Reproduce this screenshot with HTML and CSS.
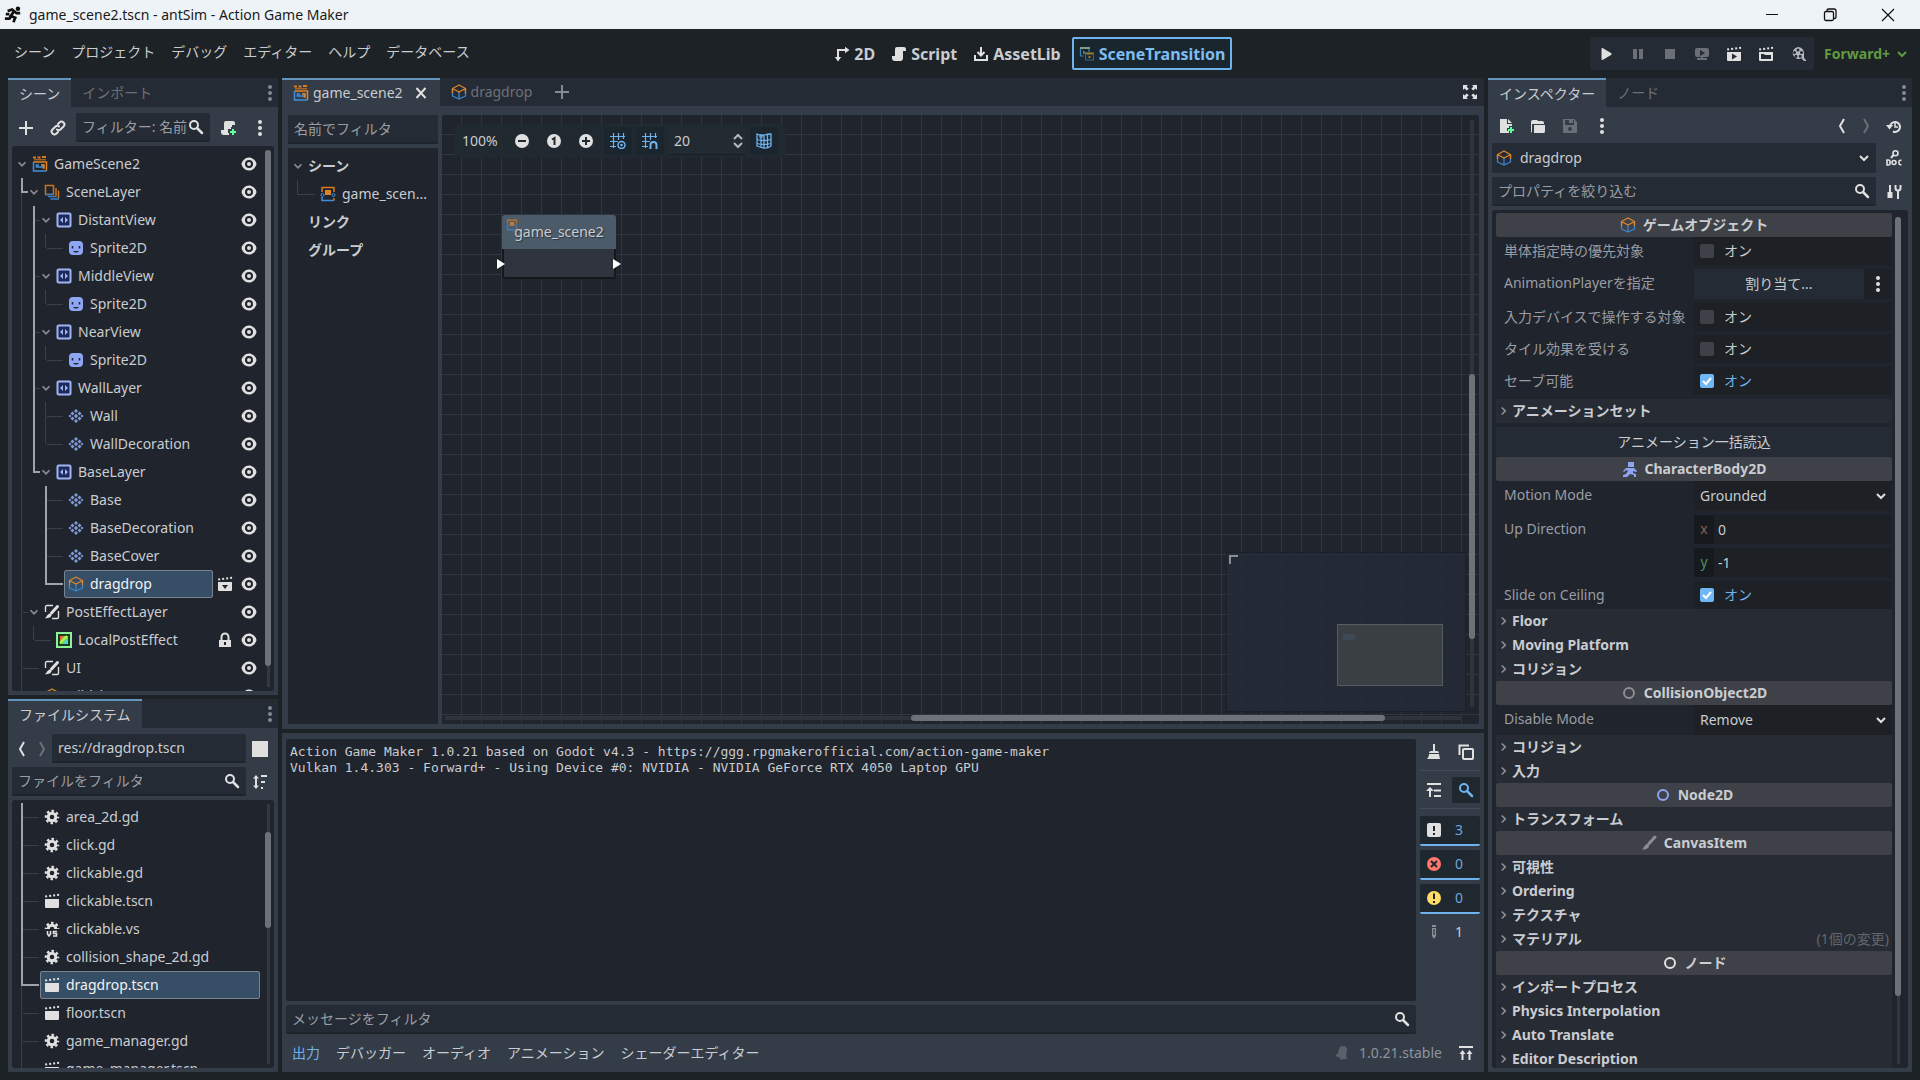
FILE: index.html
```html
<!DOCTYPE html>
<html lang="ja">
<head>
<meta charset="utf-8">
<title>game_scene2.tscn - antSim - Action Game Maker</title>
<link rel="stylesheet" href="styles.css">
</head>
<body>
<svg class="sprite" aria-hidden="true">
  <symbol id="eye" viewBox="0 0 16 16"><path fill="currentColor" d="M8 1.500C4 1.500 1 5 .5 8c.5 3 3.500 6.500 7.500 6.500s7-3.500 7.500-6.500c-.5-3-3.500-6.500-7.500-6.500zm0 2.500a4 4 0 0 1 0 8 4 4 0 0 1 0-8zm0 2a2 2 0 0 0 0 4 2 2 0 0 0 0-4z" fill-rule="evenodd"/></symbol>
  <symbol id="dots" viewBox="0 0 16 16"><g fill="currentColor"><circle cx="8" cy="2" r="2"/><circle cx="8" cy="8" r="2"/><circle cx="8" cy="14" r="2"/></g></symbol>
  <symbol id="plus" viewBox="0 0 16 16"><path d="M8 1v14M1 8h14" stroke="currentColor" stroke-width="2"/></symbol>
  <symbol id="link" viewBox="0 0 16 16"><g fill="none" stroke="currentColor" stroke-width="2" stroke-linecap="round"><path d="M7 9.500a2.600 2.600 0 0 0 3.500 0l3-3a2.600 2.600 0 0 0-4-4L8 4"/><path d="M9 6.500a2.600 2.600 0 0 0-3.500 0l-3 3a2.600 2.600 0 0 0 4 4L8 12"/></g></symbol>
  <symbol id="search" viewBox="0 0 16 16"><circle cx="6" cy="6" r="4" fill="none" stroke="currentColor" stroke-width="2"/><path d="M9 9l5 5" stroke="currentColor" stroke-width="2.500" stroke-linecap="round"/></symbol>
  <symbol id="script" viewBox="0 0 16 16"><path fill="currentColor" d="M6 1a2 2 0 0 0-2 2v7H1v2a3 3 0 0 0 3 3h6a3 3 0 0 0 2-3V5h3V3a2 2 0 0 0-2-2z"/></symbol>
  <symbol id="scriptadd" viewBox="0 0 16 16"><path fill="currentColor" d="M6 1a2 2 0 0 0-2 2v7H1v2a3 3 0 0 0 3 3h5v-2H8V9h3V7h1V5h3V3a2 2 0 0 0-2-2z"/><path fill="#5fff97" d="M12 9h2v2h2v2h-2v2h-2v-2h-2v-2h2z"/></symbol>
  <symbol id="down" viewBox="0 0 16 16"><path d="M4 6l4 4 4-4" fill="none" stroke="currentColor" stroke-width="2"/></symbol>
  <symbol id="rightarrow" viewBox="0 0 16 16"><path d="M6 4l4 4-4 4" fill="none" stroke="currentColor" stroke-width="2"/></symbol>
  <symbol id="back" viewBox="0 0 16 16"><path d="M10 1L6 8l4 7" fill="none" stroke="currentColor" stroke-width="2"/></symbol>
  <symbol id="fwd" viewBox="0 0 16 16"><path d="M6 1l4 7-4 7" fill="none" stroke="currentColor" stroke-width="2"/></symbol>
  <symbol id="gamescene" viewBox="0 0 16 16"><path d="M1 1.500h3M5.500 1.500h3M10 1h4" stroke="#d97b20" stroke-width="2"/><path d="M2 3.800h12" stroke="#d97b20"/><path d="M14.500 15V6h-13" fill="none" stroke="#e08326" stroke-width="1.500"/><path d="M1.500 6v9h13" fill="none" stroke="#3f8fdc" stroke-width="1.500"/><path d="M8 11H4.500v-2H7M8 11h3.500v-2H9.500" fill="none" stroke="#3f8fdc" stroke-width="1.500"/><path d="M9 9h3v3h-1.500" fill="none" stroke="#e08326" stroke-width="1.500"/></symbol>
  <symbol id="layers" viewBox="0 0 16 16"><path d="M1.500 10.500v-9h8v9z" fill="none" stroke="#c8731f" stroke-width="1.500"/><path d="M12 4v8.500M14.500 6.500v8" stroke="#c8731f" stroke-width="1.500"/><path d="M1 10.500h8.500M4 12.700h8.500M6.500 15h8.500" stroke="#3f7fc0" stroke-width="1.300"/></symbol>
  <symbol id="parallax" viewBox="0 0 16 16"><rect x="1.500" y="1.500" width="13" height="13" rx="1" fill="#1c2a5a" stroke="#a0b4f5" stroke-width="2"/><path d="M7 5v6L4 8zM9 5v6l3-3z" fill="#a0b4f5"/></symbol>
  <symbol id="sprite" viewBox="0 0 16 16"><rect x="1" y="1" width="14" height="14" rx="4" fill="#8da5f3"/><path d="M4.500 6v2.500M11.500 6v2.500" stroke="#1c2740" stroke-width="1.600"/><path d="M5 11c1.500 2 4.500 2 6 0z" fill="#1c2740"/></symbol>
  <symbol id="tiles" viewBox="0 0 16 16"><g fill="#8199d8"><path d="M8 1l2 2-2 2-2-2zM4.500 3.500l2 2-2 2-2-2zM11.500 3.500l2 2-2 2-2-2zM8 5.800L10.200 8 8 10.200 5.800 8zM2 6.500L3.500 8 2 9.500.5 8zM14 6.500L15.500 8 14 9.500 12.500 8zM4.500 8.500l2 2-2 2-2-2zM11.500 8.500l2 2-2 2-2-2zM8 11l2 2-2 2-2-2z"/></g></symbol>
  <symbol id="cube" viewBox="0 0 16 16"><g fill="none" stroke-width="1.300" stroke-linejoin="round"><path d="M1.500 4.500V12L8 15l6.500-3V4.500" stroke="#3d86cf"/><path d="M8 8v7" stroke="#3d86cf"/><path d="M1.500 9V4.500L8 1l6.500 3.500V9M1.500 4.500L8 8l6.500-3.500" stroke="#dd842c"/></g></symbol>
  <symbol id="canvaslayer" viewBox="0 0 16 16"><path d="M1.500 8V3a1.500 1.500 0 0 1 1.500-1.500h6M14.500 7v6a1.500 1.500 0 0 1-1.500 1.500H8" fill="none" stroke="currentColor" stroke-width="1.400"/><path d="M13.500 2.500L7.500 9" stroke="currentColor" stroke-width="3" stroke-linecap="round"/><path d="M6 9.500c2 0 2 2.500.5 3.500S3 14.500 1 14c2-1 2-4 5-4.500z" fill="currentColor"/></symbol>
  <symbol id="effect" viewBox="0 0 16 16"><rect x="1" y="1" width="14" height="14" fill="#1d3a20" stroke="#8cf29a" stroke-width="2"/><path d="M4 4h8v8H4z" fill="#5ce65c"/><path d="M4 4h4L4 9z" fill="#f0603a"/><path d="M12 6v6H7z" fill="#52cfe0"/><path d="M11 4L4 11" stroke="#c5ec40" stroke-width="2"/></symbol>
  <symbol id="clap" viewBox="0 0 16 16"><path fill="currentColor" d="M1 6h14v8a1 1 0 0 1-1 1H2a1 1 0 0 1-1-1zM1 2.500l2-.3.3 2-2 .3zM5 2l2-.3.3 2-2 .3zM9 1.500l2-.3.3 2-2 .3zM13 1l2-.3.200 2-2 .3z"/></symbol>
  <symbol id="openscene" viewBox="0 0 16 16"><use href="#clap"/><path d="M5 9h6l-3 4z" fill="#20242d"/></symbol>
  <symbol id="playscene" viewBox="0 0 16 16"><use href="#clap"/><path d="M6 7.500v6l5-3z" fill="#252b34"/></symbol>
  <symbol id="customscene" viewBox="0 0 16 16"><use href="#clap"/><path d="M3 8h3l1 1h6v4H3z" fill="#252b34"/></symbol>
  <symbol id="lock" viewBox="0 0 16 16"><path d="M4.500 8V5a3.500 3.500 0 0 1 7 0v3" fill="none" stroke="currentColor" stroke-width="2"/><path fill="currentColor" fill-rule="evenodd" d="M2 8h12v7H2zm5 2v3h2v-3z"/></symbol>
  <symbol id="gear" viewBox="0 0 16 16"><g fill="none" stroke="currentColor"><circle cx="8" cy="8" r="3.800" stroke-width="3"/><circle cx="8" cy="8" r="6" stroke-width="2.500" stroke-dasharray="2.500 2.212" stroke-dashoffset="1.250"/></g></symbol>
  <symbol id="gearvs" viewBox="0 0 16 16"><g fill="none" stroke="currentColor"><path d="M4.200 8a3.800 3.800 0 0 1 7.600 0" stroke-width="3"/><path d="M2 8a6 6 0 0 1 12 0" stroke-width="2.500" stroke-dasharray="2.500 2.212" stroke-dashoffset="1.250"/><path d="M3.500 10v3l1.500 2 1.500-2v-3M13 10.500H9.500v2h3V15H9" stroke-width="1.600"/></g></symbol>
  <symbol id="sort" viewBox="0 0 16 16"><path d="M4 3v10" stroke="currentColor" stroke-width="2"/><path fill="currentColor" d="M1 4.500L4 1l3 3.500zM1 11.500L4 15l3-3.500zM9 1h6v2H9zM9 7h4v2H9zM9 13h2v2H9z"/></symbol>
  <symbol id="scenenode" viewBox="0 0 16 16"><path d="M2 6V1.500h12V6M14 12v2.500" fill="none" stroke="#d97b20" stroke-width="1.500"/><path d="M2 11v3.500h12" fill="none" stroke="#3f8fdc" stroke-width="1.500"/><circle cx="2.500" cy="9" r="1.500" fill="none" stroke="#3f8fdc"/><circle cx="13.500" cy="9" r="1.500" fill="none" stroke="#3f8fdc"/><path d="M5 4h6v5H5z" fill="#e08326"/></symbol>
  <symbol id="close" viewBox="0 0 16 16"><path d="M3.500 3l9 10M12.500 3l-9 10" stroke="currentColor" stroke-width="2"/></symbol>
  <symbol id="expand" viewBox="0 0 16 16"><path fill="currentColor" d="M1 1h5L4.500 2.500l2.200 2.200-1.900 1.900-2.300-2.200L1 6zM15 1v5l-1.500-1.600-2.300 2.200-1.900-1.900 2.200-2.200L10 1zM1 15v-5l1.500 1.600 2.300-2.200 1.900 1.900-2.200 2.200L6 15zM15 15h-5l1.500-1.500-2.200-2.200 1.900-1.900 2.300 2.200L15 10z"/></symbol>
  <symbol id="zoomout" viewBox="0 0 16 16"><circle cx="8" cy="8" r="7" fill="currentColor"/><path d="M4 8h8" stroke="#20282f" stroke-width="2"/></symbol>
  <symbol id="zoomreset" viewBox="0 0 16 16"><circle cx="8" cy="8" r="7" fill="currentColor"/><path d="M6 6.500L8.500 5v7" fill="none" stroke="#20282f" stroke-width="2"/></symbol>
  <symbol id="zoomin" viewBox="0 0 16 16"><circle cx="8" cy="8" r="7" fill="currentColor"/><path d="M4 8h8M8 4v8" stroke="#20282f" stroke-width="2"/></symbol>
  <symbol id="gridview" viewBox="0 0 16 16"><path d="M3.500 0v15M8.500 0v7M13.500 0v6M0 3.500h15M0 8.500h8M0 13.500h6" stroke="currentColor" stroke-width="1.200"/><circle cx="11.500" cy="12" r="3.500" fill="none" stroke="currentColor" stroke-width="1.500"/><circle cx="11.500" cy="12" r="1.300" fill="currentColor"/></symbol>
  <symbol id="gridsnap" viewBox="0 0 16 16"><path d="M3.500 0v15M8.500 0v7M13.500 0v5M0 3.500h15M0 8.500h8M0 13.500h6" stroke="currentColor" stroke-width="1.200"/><path d="M8.500 16v-4a3 3 0 0 1 6 0v4" fill="none" stroke="currentColor" stroke-width="2"/></symbol>
  <symbol id="spin" viewBox="0 0 16 16"><path d="M4 6l4-4 4 4M4 10l4 4 4-4" fill="none" stroke="currentColor" stroke-width="2"/></symbol>
  <symbol id="map" viewBox="0 0 16 16"><path d="M1 1q3.500 2 7 1t7-1v12q-3.500 2.500-7 2t-7-2zM5 2v12M8 2v13M11.500 2v13M1 6.500q7 2 14 0M1 10.500q7 2 14 0" fill="none" stroke="currentColor" stroke-width="1.300"/><path d="M3 1h4v4H3z" fill="currentColor" opacity=".6"/></symbol>
  <symbol id="axes" viewBox="0 0 16 16"><path d="M4 13V4h8" fill="none" stroke="currentColor" stroke-width="2"/><path fill="currentColor" d="M.8 11h6.400L4 15.500zM11 .8v6.400L15.500 4z"/></symbol>
  <symbol id="download" viewBox="0 0 16 16"><path d="M2 9v5h12V9M8 1v8M4.500 6L8 9.500 11.500 6" fill="none" stroke="currentColor" stroke-width="2"/></symbol>
  <symbol id="transition" viewBox="0 0 16 16"><path d="M1.500 2v8h3M1 2.500h9V6" fill="none" stroke="#3f83ab" stroke-width="1.200"/><path d="M1 2h10" stroke="#7d9f8a" stroke-width="2"/><path d="M6 7.500h9" stroke="#a07f25" stroke-width="2"/><path d="M6.500 7v7h8V7" fill="none" stroke="#32638c" stroke-width="1.200"/><path d="M4 4.500l3 2-3 2z" fill="#3f83ab"/><path d="M9.500 9.500l3 1.500-3 1.500z" fill="#a07f25"/></symbol>
  <symbol id="play" viewBox="0 0 16 16"><path d="M3.500 3v10a1 1 0 0 0 1.500.7L13 9a1.200 1.200 0 0 0 0-2L5 2.300A1 1 0 0 0 3.500 3z" fill="currentColor"/></symbol>
  <symbol id="pause" viewBox="0 0 16 16"><path d="M3 3h4v10H3zM9 3h4v10H9z" fill="currentColor"/></symbol>
  <symbol id="stop" viewBox="0 0 16 16"><path d="M3 3h10v10H3z" fill="currentColor"/></symbol>
  <symbol id="remote" viewBox="0 0 16 16"><path fill="currentColor" fill-rule="evenodd" d="M3 2h10a2 2 0 0 1 2 2v5a2 2 0 0 1-2 2H3a2 2 0 0 1-2-2V4a2 2 0 0 1 2-2zm3 2v6l5-3zM7 11h2v1h4v2H3v-2h4z"/></symbol>
  <symbol id="movie" viewBox="0 0 16 16"><path fill="currentColor" fill-rule="evenodd" d="M8 1a6 6 0 0 1 6 6v5l2 2v1h-2l-2-2v-1a6 6 0 1 1-4-11zM8 2.500a1.500 1.500 0 0 0 0 3 1.500 1.500 0 0 0 0-3zM4.500 5a1.500 1.500 0 0 0 0 3 1.500 1.500 0 0 0 0-3zm7 0a1.500 1.500 0 0 0 0 3 1.500 1.500 0 0 0 0-3zM6 8.800a1.500 1.500 0 0 0 0 3 1.500 1.500 0 0 0 0-3zm4.200 0a1.500 1.500 0 0 0 0 3 1.500 1.500 0 0 0 0-3z"/></symbol>
  <symbol id="newfile" viewBox="0 0 16 16"><path fill="currentColor" d="M2 1h7v5h5v2h-3v2H9v3h2v2H2zM10 1l4 4h-4z"/><path fill="#5fff97" d="M12 9h2v2h2v2h-2v2h-2v-2h-2v-2h2z"/></symbol>
  <symbol id="folder" viewBox="0 0 16 16"><path fill="currentColor" d="M3 2a2 2 0 0 0-2 2v9a2 2 0 0 0 1 1.700V6h12V5a2 2 0 0 0-2-2H8L7 2zM4 7v8h10a2 2 0 0 0 1-2V7z"/></symbol>
  <symbol id="save" viewBox="0 0 16 16"><path fill="currentColor" fill-rule="evenodd" d="M2 1h10l3 3v10a1 1 0 0 1-1 1H2a1 1 0 0 1-1-1V2a1 1 0 0 1 1-1zm1 1v5h9V2h-1v3H7V2zm5 7a2 2 0 0 0 0 4 2 2 0 0 0 0-4z"/></symbol>
  <symbol id="history" viewBox="0 0 16 16"><path d="M4 9a5 5 0 1 1 3 4.500" fill="none" stroke="currentColor" stroke-width="2"/><path d="M0 7h7l-3.500 4.500z" fill="currentColor"/><path d="M9 5v4h3" fill="none" stroke="currentColor" stroke-width="1.500"/></symbol>
  <symbol id="doc" viewBox="0 0 16 16"><g fill="none" stroke="currentColor" stroke-width="1.600"><circle cx="9.500" cy="3.300" r="2.500"/><path d="M7.500 5L5 8" stroke-width="2"/><path d="M1 10v5h1.500a1.500 1.500 0 0 0 1.500-1.500v-2A1.500 1.500 0 0 0 2.500 10z"/><circle cx="8" cy="12.500" r="2"/><path d="M15.500 10.300h-1a1.500 1.500 0 0 0-1.500 1.500v1.500a1.500 1.500 0 0 0 1.500 1.500h1"/></g></symbol>
  <symbol id="tools" viewBox="0 0 16 16"><path d="M4 1v8M12 6v9" stroke="currentColor" stroke-width="2"/><path d="M4 8v6" stroke="currentColor" stroke-width="5"/><path d="M9.500 1v3a2.500 2.500 0 0 0 5 0V1" fill="none" stroke="currentColor" stroke-width="2"/></symbol>
  <symbol id="charbody" viewBox="0 0 16 16"><path fill="#8da5f3" d="M6 1h6v5H6zM4 7h8l3 3-1 1-3-1v2l3 1v3h-2v-2l-4-1-3 3H1v-2l3-1 2-3-2-1-2 2-1-1z"/></symbol>
  <symbol id="ring" viewBox="0 0 16 16"><circle cx="8" cy="8" r="5" fill="none" stroke="currentColor" stroke-width="2"/></symbol>
  <symbol id="brush" viewBox="0 0 16 16"><path d="M14 2L8 8.500" stroke="currentColor" stroke-width="3" stroke-linecap="round"/><path d="M6.500 9c2 .3 2 3 .5 4s-3.500 1.500-6 1.500c2-1 2-5 5.500-5.500z" fill="currentColor"/></symbol>
  <symbol id="broom" viewBox="0 0 16 16"><path fill="currentColor" d="M7 0h2v7h2a2 2 0 0 1 2 2H3a2 2 0 0 1 2-2h2zM3 10h10l1 5H1c1-1 2-3 2-5z"/></symbol>
  <symbol id="copy" viewBox="0 0 16 16"><path d="M1.500 11V1.500H11" fill="none" stroke="currentColor" stroke-width="2"/><rect x="5" y="5" width="10" height="10" rx="1" fill="none" stroke="currentColor" stroke-width="2"/></symbol>
  <symbol id="collapse" viewBox="0 0 16 16"><path d="M1 2h14M8 8.500h7M8 14h7M4 15V7" stroke="currentColor" stroke-width="2"/><path d="M0 9l4-4 4 4z" fill="currentColor"/></symbol>
  <symbol id="msg" viewBox="0 0 16 16"><rect x="1" y="1" width="14" height="14" rx="2" fill="#e0e0e0"/><path d="M8 4v5M8 11v2" stroke="#1d262e" stroke-width="2"/></symbol>
  <symbol id="err" viewBox="0 0 16 16"><circle cx="8" cy="8" r="7" fill="#ff786b"/><path d="M5 5l6 6M11 5l-6 6" stroke="#1d262e" stroke-width="2"/></symbol>
  <symbol id="warn" viewBox="0 0 16 16"><circle cx="8" cy="8" r="7" fill="#ffdd65"/><path d="M8 3.500V9M8 11v2" stroke="#1d262e" stroke-width="2"/></symbol>
  <symbol id="pencil" viewBox="0 0 16 16"><path d="M6 1h4v2H6zM6 4h4v8l-2 3-2-3z" fill="currentColor"/><path d="M8 5v6" stroke="#343c48" stroke-width="1.300"/></symbol>
  <symbol id="bell" viewBox="0 0 16 16"><path d="M10 1a4 4 0 0 1 4 4l-1 6 1 3h-4l-1 1-2-1 .5-1L2 11l3-3 1-4a4 4 0 0 1 4-3z" fill="currentColor"/></symbol>
  <symbol id="pinup" viewBox="0 0 16 16"><path d="M1 2h14M4.500 15V7M11.500 15V7" stroke="currentColor" stroke-width="2"/><path fill="currentColor" d="M1.500 9l3-4 3 4zM8.500 9l3-4 3 4z"/></symbol>
  <symbol id="runner" viewBox="0 0 20 20"><circle cx="15.500" cy="3" r="2.500" fill="currentColor"/><path d="M4 5.500L9 4l5 4h4M11 6l-3.500 5 5 2-2 5M8.500 11L6 14H1M2 9h4" fill="none" stroke="currentColor" stroke-width="3"/></symbol>
</svg>

<header class="titlebar">
  <svg class="app-icon"><use href="#runner"/></svg>
  <span class="window-title">game_scene2.tscn - antSim - Action Game Maker</span>
  <button class="win" aria-label="最小化"><svg viewBox="0 0 16 16"><path d="M2 7.500h12" stroke="#111"/></svg></button>
  <button class="win" aria-label="元に戻す"><svg viewBox="0 0 16 16"><path d="M5 4V3.500A1.500 1.500 0 0 1 6.500 2H12a2 2 0 0 1 2 2v6a1.500 1.500 0 0 1-1.500 1.500H12" fill="none" stroke="#111" stroke-width="1.300"/><rect x="2.500" y="4.500" width="9" height="9" rx="1.500" fill="none" stroke="#111" stroke-width="1.300"/></svg></button>
  <button class="win" aria-label="閉じる"><svg viewBox="0 0 16 16"><path d="M2 2l12 12M14 2L2 14" stroke="#111" stroke-width="1.200"/></svg></button>
</header>

<div class="menubar">
  <nav class="menus">
    <button>シーン</button><button>プロジェクト</button><button>デバッグ</button><button>エディター</button><button>ヘルプ</button><button>データベース</button>
  </nav>
  <nav class="modes">
    <button><svg class="i"><use href="#axes"/></svg>2D</button>
    <button><svg class="i"><use href="#script"/></svg>Script</button>
    <button><svg class="i"><use href="#download"/></svg>AssetLib</button>
    <button class="current"><svg class="i"><use href="#transition"/></svg>SceneTransition</button>
  </nav>
  <div class="run">
    <div class="runbar">
      <button aria-label="実行"><svg class="i"><use href="#play"/></svg></button>
      <button class="off" aria-label="一時停止"><svg class="i"><use href="#pause"/></svg></button>
      <button class="off" aria-label="停止"><svg class="i"><use href="#stop"/></svg></button>
      <button class="off" aria-label="リモート"><svg class="i"><use href="#remote"/></svg></button>
      <button aria-label="シーンを実行"><svg class="i"><use href="#playscene"/></svg></button>
      <button aria-label="シーンを選んで実行"><svg class="i"><use href="#customscene"/></svg></button>
      <button class="soft" aria-label="ムービー"><svg class="i"><use href="#movie"/></svg></button>
    </div>
    <button class="renderer">Forward+<svg class="i"><use href="#down"/></svg></button>
  </div>
</div>

<main class="workspace">
  <div class="column left">
    <section class="dock scene-dock">
      <div class="tabs"><button class="tab current">シーン</button><button class="tab">インポート</button><button class="more" aria-label="メニュー"><svg class="i"><use href="#dots"/></svg></button></div>
      <div class="toolrow">
        <button class="tool" aria-label="追加"><svg class="i"><use href="#plus"/></svg></button>
        <button class="tool" aria-label="リンク"><svg class="i"><use href="#link"/></svg></button>
        <label class="field"><input type="text" aria-label="フィルター" placeholder="フィルター: 名前、t:タイプ"><svg class="i"><use href="#search"/></svg></label>
        <button class="tool wide" aria-label="スクリプトを追加"><svg class="i"><use href="#scriptadd"/></svg></button>
        <button class="tool narrow" aria-label="その他"><svg class="i"><use href="#dots"/></svg></button>
      </div>
      <div class="panel">
        <ul class="tree">
          <li class="root"><div class="row"><svg class="arrow"><use href="#down"/></svg><span class="item"><svg class="i"><use href="#gamescene"/></svg>GameScene2</span><svg class="i end"><use href="#eye"/></svg></div>
            <ul>
              <li class="branch turn"><div class="row"><svg class="arrow"><use href="#down"/></svg><span class="item"><svg class="i"><use href="#layers"/></svg>SceneLayer</span><svg class="i end"><use href="#eye"/></svg></div>
                <ul>
                  <li class="branch path"><div class="row"><svg class="arrow"><use href="#down"/></svg><span class="item"><svg class="i"><use href="#parallax"/></svg>DistantView</span><svg class="i end"><use href="#eye"/></svg></div>
                    <ul><li><div class="row leaf"><span class="item"><svg class="i"><use href="#sprite"/></svg>Sprite2D</span><svg class="i end"><use href="#eye"/></svg></div></li></ul></li>
                  <li class="branch path"><div class="row"><svg class="arrow"><use href="#down"/></svg><span class="item"><svg class="i"><use href="#parallax"/></svg>MiddleView</span><svg class="i end"><use href="#eye"/></svg></div>
                    <ul><li><div class="row leaf"><span class="item"><svg class="i"><use href="#sprite"/></svg>Sprite2D</span><svg class="i end"><use href="#eye"/></svg></div></li></ul></li>
                  <li class="branch path"><div class="row"><svg class="arrow"><use href="#down"/></svg><span class="item"><svg class="i"><use href="#parallax"/></svg>NearView</span><svg class="i end"><use href="#eye"/></svg></div>
                    <ul><li><div class="row leaf"><span class="item"><svg class="i"><use href="#sprite"/></svg>Sprite2D</span><svg class="i end"><use href="#eye"/></svg></div></li></ul></li>
                  <li class="branch path"><div class="row"><svg class="arrow"><use href="#down"/></svg><span class="item"><svg class="i"><use href="#parallax"/></svg>WallLayer</span><svg class="i end"><use href="#eye"/></svg></div>
                    <ul>
                      <li><div class="row leaf"><span class="item"><svg class="i"><use href="#tiles"/></svg>Wall</span><svg class="i end"><use href="#eye"/></svg></div></li>
                      <li><div class="row leaf"><span class="item"><svg class="i"><use href="#tiles"/></svg>WallDecoration</span><svg class="i end"><use href="#eye"/></svg></div></li>
                    </ul></li>
                  <li class="branch turn"><div class="row"><svg class="arrow"><use href="#down"/></svg><span class="item"><svg class="i"><use href="#parallax"/></svg>BaseLayer</span><svg class="i end"><use href="#eye"/></svg></div>
                    <ul>
                      <li class="path"><div class="row leaf"><span class="item"><svg class="i"><use href="#tiles"/></svg>Base</span><svg class="i end"><use href="#eye"/></svg></div></li>
                      <li class="path"><div class="row leaf"><span class="item"><svg class="i"><use href="#tiles"/></svg>BaseDecoration</span><svg class="i end"><use href="#eye"/></svg></div></li>
                      <li class="path"><div class="row leaf"><span class="item"><svg class="i"><use href="#tiles"/></svg>BaseCover</span><svg class="i end"><use href="#eye"/></svg></div></li>
                      <li class="turn"><div class="row leaf"><span class="item selected"><svg class="i"><use href="#cube"/></svg>dragdrop</span><svg class="i end"><use href="#openscene"/></svg><svg class="i end"><use href="#eye"/></svg></div></li>
                    </ul></li>
                </ul></li>
              <li class="branch"><div class="row"><svg class="arrow"><use href="#down"/></svg><span class="item"><svg class="i"><use href="#canvaslayer"/></svg>PostEffectLayer</span><svg class="i end"><use href="#eye"/></svg></div>
                <ul><li><div class="row leaf"><span class="item"><svg class="i"><use href="#effect"/></svg>LocalPostEffect</span><svg class="i end"><use href="#lock"/></svg><svg class="i end"><use href="#eye"/></svg></div></li></ul></li>
              <li><div class="row leaf"><span class="item"><svg class="i"><use href="#canvaslayer"/></svg>UI</span><svg class="i end"><use href="#eye"/></svg></div></li>
              <li><div class="row leaf"><span class="item"><svg class="i"><use href="#cube"/></svg>wildch</span><svg class="i end"><use href="#eye"/></svg></div></li>
            </ul></li>
        </ul>
        <div class="scroll"><span class="thumb t-scene"></span></div>
      </div>
    </section>

    <section class="dock file-dock">
      <div class="tabs"><button class="tab current">ファイルシステム</button><button class="more" aria-label="メニュー"><svg class="i"><use href="#dots"/></svg></button></div>
      <div class="filerow">
        <button class="step" aria-label="戻る"><svg class="i"><use href="#back"/></svg></button>
        <button class="step off" aria-label="進む"><svg class="i"><use href="#fwd"/></svg></button>
        <label class="field path-field"><input type="text" aria-label="パス" value="res://dragdrop.tscn"></label>
        <button class="split" aria-label="分割表示"></button>
      </div>
      <div class="filerow second">
        <label class="field"><input type="text" aria-label="ファイルをフィルタ" placeholder="ファイルをフィルタ"><svg class="i"><use href="#search"/></svg></label>
        <button class="tool side" aria-label="並べ替え"><svg class="i"><use href="#sort"/></svg></button>
      </div>
      <div class="panel">
        <ul class="tree files">
          <li class="path"><div class="row leaf"><span class="item"><svg class="i"><use href="#gear"/></svg>area_2d.gd</span></div></li>
          <li class="path"><div class="row leaf"><span class="item"><svg class="i"><use href="#gear"/></svg>click.gd</span></div></li>
          <li class="path"><div class="row leaf"><span class="item"><svg class="i"><use href="#gear"/></svg>clickable.gd</span></div></li>
          <li class="path"><div class="row leaf"><span class="item"><svg class="i"><use href="#clap"/></svg>clickable.tscn</span></div></li>
          <li class="path"><div class="row leaf"><span class="item"><svg class="i"><use href="#gearvs"/></svg>clickable.vs</span></div></li>
          <li class="path"><div class="row leaf"><span class="item"><svg class="i"><use href="#gear"/></svg>collision_shape_2d.gd</span></div></li>
          <li class="turn"><div class="row leaf"><span class="item selected"><svg class="i"><use href="#clap"/></svg>dragdrop.tscn</span></div></li>
          <li><div class="row leaf"><span class="item"><svg class="i"><use href="#clap"/></svg>floor.tscn</span></div></li>
          <li><div class="row leaf"><span class="item"><svg class="i"><use href="#gear"/></svg>game_manager.gd</span></div></li>
          <li><div class="row leaf"><span class="item"><svg class="i"><use href="#clap"/></svg>game_manager.tscn</span></div></li>
        </ul>
        <div class="scroll"><span class="thumb t-file"></span></div>
      </div>
    </section>
  </div>

  <div class="column center">
    <section class="dock editor">
      <div class="tabs">
        <button class="tab current doc"><svg class="i"><use href="#gamescene"/></svg>game_scene2<svg class="i x"><use href="#close"/></svg></button>
        <button class="tab doc"><svg class="i"><use href="#cube"/></svg>dragdrop</button>
        <button class="newtab" aria-label="新規"><svg class="i"><use href="#plus"/></svg></button>
        <button class="more bright" aria-label="集中モード"><svg class="i"><use href="#expand"/></svg></button>
      </div>
      <div class="split-view">
        <aside class="scene-list">
          <label class="field"><input type="text" aria-label="名前でフィルタ" placeholder="名前でフィルタ"></label>
          <ul class="groups">
            <li><div class="group"><svg class="arrow"><use href="#down"/></svg>シーン</div>
              <div class="entry"><svg class="i"><use href="#scenenode"/></svg>game_scen...</div></li>
            <li><div class="group plain">リンク</div></li>
            <li><div class="group plain">グループ</div></li>
          </ul>
        </aside>
        <div class="canvas">
          <div class="canvas-tools">
            <span class="zoom">100%</span>
            <button aria-label="縮小"><svg class="i"><use href="#zoomout"/></svg></button>
            <button aria-label="等倍"><svg class="i"><use href="#zoomreset"/></svg></button>
            <button aria-label="拡大"><svg class="i"><use href="#zoomin"/></svg></button>
            <button class="lit" aria-label="グリッド表示"><svg class="i"><use href="#gridview"/></svg></button>
            <button class="lit" aria-label="グリッドスナップ"><svg class="i"><use href="#gridsnap"/></svg></button>
            <label class="spin"><input type="text" aria-label="グリッド間隔" value="20"><svg class="i"><use href="#spin"/></svg></label>
            <button class="lit" aria-label="ミニマップ"><svg class="i"><use href="#map"/></svg></button>
          </div>
          <div class="node">
            <div class="node-head"><svg class="node-icon"><use href="#scenenode"/></svg>game_scene2</div>
            <div class="node-body"><svg class="port" viewBox="0 0 8 10"><path d="M0 0l8 5-8 5z" fill="#fff"/></svg><svg class="port" viewBox="0 0 8 10"><path d="M0 0l8 5-8 5z" fill="#fff"/></svg></div>
          </div>
          <div class="minimap"><span class="corner"></span><div class="viewport"><span class="mini-node"></span></div></div>
          <div class="vbar"><span></span></div>
          <div class="hbar"><span></span></div>
        </div>
      </div>
    </section>

    <section class="dock bottom">
      <div class="output-area">
        <div class="output-main">
          <pre class="log">Action Game Maker 1.0.21 based on Godot v4.3 - https://ggg.rpgmakerofficial.com/action-game-maker
Vulkan 1.4.303 - Forward+ - Using Device #0: NVIDIA - NVIDIA GeForce RTX 4050 Laptop GPU</pre>
          <label class="field"><input type="text" aria-label="メッセージをフィルタ" placeholder="メッセージをフィルタ"><svg class="i"><use href="#search"/></svg></label>
        </div>
        <div class="output-side">
          <div class="pair"><button aria-label="消去"><svg class="i"><use href="#broom"/></svg></button><button aria-label="コピー"><svg class="i"><use href="#copy"/></svg></button></div>
          <div class="pair"><button aria-label="折りたたむ"><svg class="i"><use href="#collapse"/></svg></button><button class="lit" aria-label="検索"><svg class="i"><use href="#search"/></svg></button></div>
          <button class="count on"><svg class="i"><use href="#msg"/></svg>3</button>
          <button class="count on"><svg class="i"><use href="#err"/></svg>0</button>
          <button class="count on"><svg class="i"><use href="#warn"/></svg>0</button>
          <button class="count"><svg class="i dim"><use href="#pencil"/></svg>1</button>
        </div>
      </div>
      <footer class="bottombar">
        <button class="current">出力</button><button>デバッガー</button><button>オーディオ</button><button>アニメーション</button><button>シェーダーエディター</button>
        <span class="version"><svg class="i bell"><use href="#bell"/></svg>1.0.21.stable</span>
        <button class="up" aria-label="パネルを拡大"><svg class="i"><use href="#pinup"/></svg></button>
      </footer>
    </section>
  </div>

  <section class="dock inspector">
    <div class="tabs"><button class="tab current">インスペクター</button><button class="tab">ノード</button><button class="more" aria-label="メニュー"><svg class="i"><use href="#dots"/></svg></button></div>
    <div class="insp-tools">
      <button aria-label="新規リソース"><svg class="i"><use href="#newfile"/></svg></button>
      <button aria-label="開く"><svg class="i"><use href="#folder"/></svg></button>
      <button class="off" aria-label="保存"><svg class="i"><use href="#save"/></svg></button>
      <button aria-label="その他"><svg class="i"><use href="#dots"/></svg></button>
      <button class="step first" aria-label="前へ"><svg class="i"><use href="#back"/></svg></button>
      <button class="step off" aria-label="次へ"><svg class="i"><use href="#fwd"/></svg></button>
      <button class="side" aria-label="履歴"><svg class="i"><use href="#history"/></svg></button>
    </div>
    <div class="insp-row tall"><button class="object"><svg class="i"><use href="#cube"/></svg><span>dragdrop</span><svg class="i"><use href="#down"/></svg></button><button class="side" aria-label="ドキュメント"><svg class="i"><use href="#doc"/></svg></button></div>
    <div class="insp-row"><label class="field"><input type="text" aria-label="プロパティを絞り込む" placeholder="プロパティを絞り込む"><svg class="i"><use href="#search"/></svg></label><button class="side" aria-label="設定"><svg class="i"><use href="#tools"/></svg></button></div>
    <div class="panel props-panel">
      <div class="props">
        <h2><svg class="i"><use href="#cube"/></svg>ゲームオブジェクト</h2>
        <div class="prop"><span>単体指定時の優先対象</span><label class="value check"><input type="checkbox">オン</label></div>
        <div class="prop"><span>AnimationPlayerを指定</span><div class="value assign"><button class="pick">割り当て...</button><button class="kebab" aria-label="その他"><svg class="i"><use href="#dots"/></svg></button></div></div>
        <div class="prop"><span>入力デバイスで操作する対象</span><label class="value check"><input type="checkbox">オン</label></div>
        <div class="prop"><span>タイル効果を受ける</span><label class="value check"><input type="checkbox">オン</label></div>
        <div class="prop"><span>セーブ可能</span><label class="value check on"><input type="checkbox" checked>オン</label></div>
        <button class="fold"><svg class="i"><use href="#rightarrow"/></svg>アニメーションセット</button>
        <button class="load">アニメーション一括読込</button>
        <h2><svg class="i"><use href="#charbody"/></svg>CharacterBody2D</h2>
        <div class="prop"><label for="motion">Motion Mode</label><div class="value choice"><select id="motion"><option>Grounded</option></select><svg class="i"><use href="#down"/></svg></div></div>
        <div class="prop"><span>Up Direction</span><div class="vector"><label class="value axis"><b class="x">x</b><input type="text" value="0"></label><label class="value axis"><b class="y">y</b><input type="text" value="-1"></label></div></div>
        <div class="prop flush"><span>Slide on Ceiling</span><label class="value check on"><input type="checkbox" checked>オン</label></div>
        <button class="fold"><svg class="i"><use href="#rightarrow"/></svg>Floor</button>
        <button class="fold"><svg class="i"><use href="#rightarrow"/></svg>Moving Platform</button>
        <button class="fold"><svg class="i"><use href="#rightarrow"/></svg>コリジョン</button>
        <h2><svg class="i grey"><use href="#ring"/></svg>CollisionObject2D</h2>
        <div class="prop flush"><label for="disable">Disable Mode</label><div class="value choice"><select id="disable"><option>Remove</option></select><svg class="i"><use href="#down"/></svg></div></div>
        <button class="fold"><svg class="i"><use href="#rightarrow"/></svg>コリジョン</button>
        <button class="fold"><svg class="i"><use href="#rightarrow"/></svg>入力</button>
        <h2><svg class="i blue"><use href="#ring"/></svg>Node2D</h2>
        <button class="fold"><svg class="i"><use href="#rightarrow"/></svg>トランスフォーム</button>
        <h2><svg class="i grey"><use href="#brush"/></svg>CanvasItem</h2>
        <button class="fold"><svg class="i"><use href="#rightarrow"/></svg>可視性</button>
        <button class="fold"><svg class="i"><use href="#rightarrow"/></svg>Ordering</button>
        <button class="fold"><svg class="i"><use href="#rightarrow"/></svg>テクスチャ</button>
        <button class="fold"><svg class="i"><use href="#rightarrow"/></svg>マテリアル<span class="note">(1個の変更)</span></button>
        <h2><svg class="i"><use href="#ring"/></svg>ノード</h2>
        <button class="fold"><svg class="i"><use href="#rightarrow"/></svg>インポートプロセス</button>
        <button class="fold"><svg class="i"><use href="#rightarrow"/></svg>Physics Interpolation</button>
        <button class="fold"><svg class="i"><use href="#rightarrow"/></svg>Auto Translate</button>
        <button class="fold"><svg class="i"><use href="#rightarrow"/></svg>Editor Description</button>
      </div>
      <div class="scroll"><span class="thumb t-props"></span></div>
    </div>
  </section>
</main>
</body>
</html>
```
FILE: styles.css
```css
:root {
  --bg: #1d2226;
  --dock: #343c48;
  --bar: #252b34;
  --deep: #20242d;
  --text: #c9ccd0;
  --dim: #6c7178;
  --blue: #6fb3ee;
  --guide: #3b3f47;
  --path: #a0a3a8;
}
* { box-sizing: border-box; }
body {
  margin: 0;
  height: 100vh;
  display: flex;
  flex-direction: column;
  overflow: hidden;
  background: var(--bg);
  color: var(--text);
  font: 14px/20px "Noto Sans", "Noto Sans CJK JP", sans-serif;
}
button, input, select {
  font: inherit;
  color: inherit;
  background: none;
  border: 0;
  padding: 0;
  margin: 0;
  min-width: 0;
}
button { white-space: nowrap; }
ul { list-style: none; margin: 0; padding: 0; }
.sprite { display: none; }
.i { width: 16px; height: 16px; flex: none; display: block; color: #e0e0e0; }
.i.grey { color: #8b8e93; }
.i.blue { color: #8da5f3; }
.off .i { color: #6b7077; }

/* window title */
.titlebar {
  flex: none;
  height: 29px;
  display: flex;
  align-items: center;
  background: #eef3f7;
  color: #1a1a1a;
  padding: 0 3px 0 4px;
}
.app-icon { width: 18px; height: 20px; color: #111; }
.window-title { flex: 1; margin-left: 7px; }
.win { width: 58px; height: 29px; display: grid; place-items: center; }
.win svg { width: 16px; height: 16px; }

/* main menu */
.menubar {
  flex: none;
  height: 49px;
  display: flex;
  justify-content: space-between;
  align-items: center;
  padding: 0 10px 0 6px;
}
.menus { display: flex; }
.menus button { padding: 0 8px 4px; }
.modes { display: flex; gap: 2px; margin-right: 8px; font-size: 16px; font-weight: 700; }
.modes button { height: 33px; display: flex; align-items: center; gap: 4px; padding: 0 5px; border: 2px solid transparent; }
.modes button.current { margin-left: 2px; color: #7dbdf2; border-color: #6fb3ee; border-radius: 2px; background: #1a262e; }
.run { display: flex; align-items: center; gap: 10px; }
.runbar { display: flex; height: 33px; background: var(--bar); border-radius: 2px; padding: 0 8px; gap: 16px; align-items: center; }
.runbar .soft .i { color: #b4b8bc; }
.renderer { display: flex; align-items: center; gap: 4px; color: #5f9b40; font-weight: 700; }
.renderer .i { color: #5f9b40; }

/* docks */
.workspace {
  flex: 1;
  min-height: 0;
  display: grid;
  grid-template-columns: 270px minmax(0, 1fr) 424px;
  gap: 4px;
  padding: 0 8px 8px;
}
.column { display: grid; gap: 4px; min-height: 0; }
.left { grid-template-rows: minmax(0, 617fr) minmax(0, 373fr); }
.center { grid-template-rows: minmax(0, 651fr) minmax(0, 339fr); }
.dock { background: var(--dock); display: flex; flex-direction: column; min-height: 0; min-width: 0; }
.tabs { flex: none; height: 29px; display: flex; background: var(--bar); }
.tab { padding: 0 11px; color: var(--dim); }
.tab.current { color: var(--text); background: var(--dock); border-top: 2px solid #6496bd; }
.tab.doc { display: flex; align-items: center; gap: 4px; }
.tab.doc .x { margin-left: 6px; }
.more { margin-left: auto; width: 16px; display: grid; place-items: center; }
.more .i { color: #858a90; }
.more.bright { width: 28px; }
.more.bright .i { color: #e0e0e0; }
.newtab { padding: 0 11px; }
.newtab .i { color: #858a90; }

.field { flex: 1; min-width: 0; height: 29px; display: flex; align-items: center; background: var(--bar); border-bottom: 2px solid #1e242a; border-radius: 2px; padding: 0 6px; }
.field input { flex: 1; width: 0; outline: 0; }
.field input::placeholder { color: #9a9ea4; opacity: 1; }

.toolrow { flex: none; display: flex; align-items: center; padding: 6px 4px 4px 2px; }
.tool { width: 32px; display: grid; place-items: center; }
.tool.wide { width: 36px; }
.tool.narrow { width: 28px; }
.toolrow .field { margin-left: 2px; }
.filerow { flex: none; display: flex; align-items: center; padding: 6px 10px 4px 4px; }
.filerow.second { padding: 0 4px 4px; }
.step { width: 20px; display: grid; place-items: center; }
.step + .path-field { margin: 0 6px 0 0; }
.split { width: 16px; height: 16px; background: #e0e0e0; }
.tool.side { width: 28px; }

.panel { flex: 1; min-height: 0; margin: 0 4px 4px; background: var(--deep); border-radius: 3px; display: flex; overflow: hidden; }
.scroll { flex: none; width: 12px; padding: 4px 3px; background: linear-gradient(#33373f, #33373f) 5px 4px / 3px calc(100% - 8px) no-repeat; }
.thumb { display: block; width: 6px; border-radius: 3px; background: #6e7278; }
.t-scene { height: 96%; }
.t-file { margin-top: 28px; height: 37%; }
.t-props { height: 92%; }

/* trees: each nested item paints its own guide lines */
.tree { flex: 1; min-width: 0; padding-top: 4px; }
.tree li {
  --v: var(--guide);
  --vw: 1px;
  --run: 16px;
  padding-left: 12px;
  background:
    linear-gradient(var(--guide), var(--guide)) 11px 14px / var(--run) 1px no-repeat,
    linear-gradient(var(--v), var(--v)) 9px 0 / var(--vw) 100% no-repeat;
}
.tree li.root { padding: 0; background: none; }
.tree li.branch { --run: 5px; }
.tree li.path { --v: var(--path); --vw: 2px; }
.tree li.turn {
  background:
    linear-gradient(var(--path), var(--path)) 9px 13px / calc(var(--run) + 2px) 2px no-repeat,
    linear-gradient(var(--path), var(--path)) 9px 0 / 2px 14px no-repeat;
}
.tree .root > ul > li.turn,
.tree.files > li.turn {
  background:
    linear-gradient(var(--path), var(--path)) 9px 13px / calc(var(--run) + 2px) 2px no-repeat,
    linear-gradient(var(--path), var(--path)) 9px 0 / 2px 14px no-repeat,
    linear-gradient(var(--guide), var(--guide)) 9px 0 / 1px 100% no-repeat;
}
.tree li:last-child:not(.turn):not(.root) {
  background:
    linear-gradient(var(--guide), var(--guide)) 11px 14px / var(--run) 1px no-repeat,
    linear-gradient(var(--guide), var(--guide)) 9px 0 / 1px 14px no-repeat;
}
.row { height: 28px; display: flex; align-items: center; padding-left: 3px; padding-right: 5px; }
.row.leaf { padding-left: 16px; }
.arrow { width: 14px; height: 14px; flex: none; color: #8b8f95; margin-right: -1px; }
.item { flex: 1; min-width: 0; height: 28px; display: flex; align-items: center; gap: 6px; padding-left: 3px; border: 1px solid transparent; border-radius: 2px; white-space: nowrap; }
.item.selected { background: #364f66; border-color: #78838d; color: #f0f2f4; }
.row .end { margin-left: 4px; }
.row .end + .end { margin-left: 8px; }
.files { padding-top: 3px; }
.files .row { padding-right: 2px; }

/* scene transition editor */
.editor { overflow: hidden; }
.editor > .tabs { height: 28px; }
.split-view { flex: 1; min-height: 0; display: flex; gap: 4px; padding: 9px 5px 5px 6px; }
.scene-list { width: 150px; flex: none; display: flex; flex-direction: column; gap: 4px; }
.scene-list .field { flex: none; border-radius: 0; }
.groups { flex: 1; background: var(--deep); padding-top: 4px; }
.group, .entry { height: 28px; display: flex; align-items: center; padding-left: 3px; font-weight: 600; }
.group .arrow { margin-right: 3px; }
.group.plain { padding-left: 20px; }
.entry {
  font-weight: 400;
  padding-left: 32px;
  gap: 6px;
  background:
    linear-gradient(var(--guide), var(--guide)) 9px 14px / 18px 1px no-repeat,
    linear-gradient(var(--guide), var(--guide)) 9px 0 / 1px 14px no-repeat;
}
.canvas {
  flex: 1;
  min-width: 0;
  position: relative;
  overflow: hidden;
  border-radius: 2px;
  background:
    linear-gradient(#31363e 1px, transparent 1px) 19px 19px / 20px 20px,
    linear-gradient(90deg, #31363e 1px, transparent 1px) 19px 19px / 20px 20px,
    var(--deep);
}
.canvas-tools { position: absolute; left: 12px; top: 9px; height: 34px; display: flex; align-items: center; padding: 0 4px 0 8px; background: rgba(33, 41, 49, .92); border-radius: 3px; }
.zoom { width: 46px; }
.canvas-tools button { width: 28px; height: 28px; margin-right: 4px; display: grid; place-items: center; }
.canvas-tools .lit { background: #1b252d; border-radius: 2px; }
.lit .i { color: var(--blue); }
.spin { width: 78px; height: 28px; display: flex; align-items: center; margin-right: 4px; padding-left: 6px; background: #222a32; border-bottom: 1px solid #1a1f24; }
.spin input { flex: 1; width: 0; }
.spin .i { color: #b4b8bc; }
.node { position: absolute; left: 60px; top: 100px; width: 114px; }
.node-head { position: relative; height: 34px; border-radius: 3px 3px 0 0; background: #4c5b6a; display: flex; align-items: center; justify-content: center; text-shadow: 1px 1px 1px #2a323b; }
.node-icon { position: absolute; left: 4px; top: 4px; width: 12px; height: 12px; opacity: .8; }
.node-body { height: 30px; background: #2f343f; border: 2px solid #14181d; border-top: 0; border-radius: 0 0 3px 3px; display: flex; align-items: center; justify-content: space-between; padding-top: 2px; }
.port { width: 8px; height: 10px; margin: 0 -7px; }
.minimap { position: absolute; right: 13px; bottom: 12px; width: 240px; height: 160px; background: rgba(36, 44, 55, .85); border: 1px solid #1a1f28; }
.corner { position: absolute; left: 2px; top: 2px; width: 9px; height: 9px; border: solid #8a8f96; border-width: 2px 0 0 2px; }
.viewport { position: absolute; right: 22px; bottom: 25px; width: 106px; height: 62px; background: rgba(61, 65, 68, .92); border: 1px solid #565c61; }
.mini-node { position: absolute; left: 5px; top: 9px; width: 12px; height: 6px; background: #3e4955; }
.vbar { position: absolute; right: 5px; top: 5px; bottom: 17px; width: 4px; background: #2f333b; }
.vbar span { position: absolute; right: -1px; bottom: 68px; width: 6px; height: 265px; border-radius: 3px; background: #6e7278; }
.hbar { position: absolute; left: 3px; right: 17px; bottom: 4px; height: 4px; background: #2f333b; }
.hbar span { position: absolute; right: 77px; bottom: -1px; width: 474px; height: 6px; border-radius: 3px; background: #6e7278; }

/* output */
.bottom { padding: 6px 4px 0; }
.output-area { flex: 1; min-height: 0; display: flex; gap: 4px; }
.output-main { flex: 1; min-width: 0; display: flex; flex-direction: column; gap: 4px; }
.log { flex: 1; margin: 0; padding: 5px 4px; background: var(--deep); border-radius: 2px; font: 13px/16px "DejaVu Sans Mono", "Liberation Mono", monospace; overflow: hidden; }
.output-main .field { flex: none; }
.output-side { width: 60px; flex: none; display: flex; flex-direction: column; }
.pair { display: flex; gap: 4px; height: 38px; align-items: center; border-bottom: 1px solid #454c57; }
.pair:first-child { height: 32px; padding-bottom: 6px; }
.pair button { width: 28px; height: 26px; display: grid; place-items: center; }
.pair .lit { background: #1f272f; border-radius: 2px; }
.count { height: 30px; margin-top: 4px; display: flex; align-items: center; gap: 13px; padding-left: 6px; border-bottom: 2px solid transparent; border-radius: 2px; }
.pair + .count { margin-top: 7px; }
.count.on { background: #1f272f; border-color: var(--blue); color: #6fa6dc; }
.count .dim { color: #8b8f95; }
.bottombar { flex: none; height: 38px; display: flex; align-items: center; padding-left: 6px; gap: 16px; }
.bottombar .current { color: var(--blue); }
.version { margin-left: auto; display: flex; align-items: center; gap: 10px; color: #8f949b; }
.bell { color: #5b616b; }
.bottombar .up { margin-right: 6px; }

/* inspector */
.insp-tools { flex: none; display: flex; align-items: center; height: 36px; padding: 2px 0 0 10px; gap: 16px; }
.insp-tools .first { margin-left: auto; margin-right: -12px; }
.insp-tools .side, .insp-row .side { width: 36px; display: grid; place-items: center; }
.insp-tools .side { margin-left: -16px; }
.insp-row { flex: none; display: flex; align-items: center; padding-left: 4px; margin-bottom: 4px; }
.insp-row.tall .object { height: 30px; }
.object { flex: 1; display: flex; align-items: center; gap: 8px; padding: 0 4px; background: var(--bar); border-radius: 2px; text-align: left; }
.object span { flex: 1; }
.props-panel { padding: 3px 4px 0; }
.props { flex: 1; min-width: 0; display: flex; flex-direction: column; }
.props > * { flex: none; }
h2 { margin: 0; height: 24px; background: #3e4148; border-radius: 2px; display: flex; align-items: center; justify-content: center; gap: 7px; font-size: 14px; line-height: 20px; font-weight: 700; }
.prop { display: grid; grid-template-columns: 1fr 1fr; margin-bottom: 4px; }
.prop.flush { margin-bottom: 0; }
.prop > span, .prop > label:first-child { color: #999da3; padding: 4px 0 0 8px; white-space: nowrap; }
.value { height: 28px; background: #1d2025; display: flex; align-items: center; }
.check { padding-left: 6px; gap: 10px; }
.check.on { color: var(--blue); }
.check input { appearance: none; width: 14px; height: 14px; background: #3e4148; border-radius: 2px; }
.check input:checked { background: #6fb7f5 url("data:image/svg+xml,%3Csvg xmlns='http://www.w3.org/2000/svg' viewBox='0 0 14 14'%3E%3Cpath d='M3 7l3 3 5-6' fill='none' stroke='white' stroke-width='2'/%3E%3C/svg%3E"); }
.assign { height: 30px; }
.pick { flex: 1; height: 30px; background: var(--bar); }
.kebab { width: 28px; display: grid; place-items: center; }
.fold { height: 24px; background: #272b34; display: flex; align-items: center; text-align: left; font-weight: 700; gap: 1px; }
.fold .i { color: #8b8f95; width: 15px; height: 14px; }
.note { margin-left: auto; padding-right: 3px; color: #62666d; font-weight: 400; }
.load { height: 30px; background: var(--bar); margin-top: 4px; }
.choice { height: 30px; padding: 0 3px 0 6px; }
.choice select { appearance: none; flex: 1; outline: 0; }
.vector { display: grid; gap: 4px; }
.axis { height: 29px; gap: 4px; }
.axis b { width: 20px; height: 29px; line-height: 28px; text-align: center; font-weight: 400; background: #16191e; }
.axis .x { color: #8a6258; }
.axis .y { color: #4f8f62; }
.axis input { flex: 1; width: 0; }
```
